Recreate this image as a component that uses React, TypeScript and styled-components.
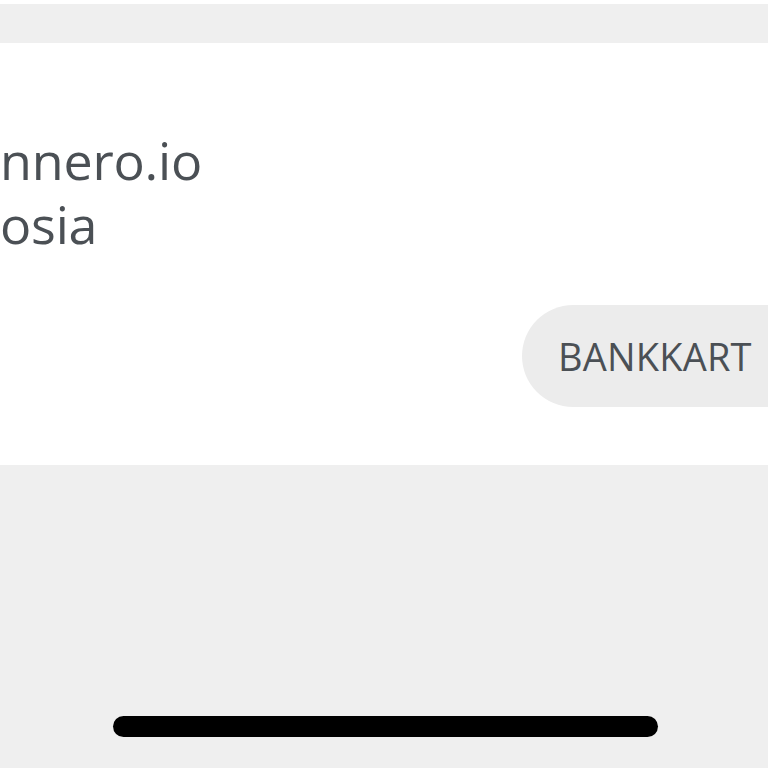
import React from "react";
import styled, { createGlobalStyle } from "styled-components";

const Global = createGlobalStyle`
  html, body {
    margin: 0;
    padding: 0;
    background: #efefef;
    overflow: hidden;
  }
  body {
    font-family: "Open Sans", "Noto Sans", sans-serif;
  }
`;

const Screen = styled.div`
  width: 768px;
  height: 768px;
  display: flex;
  flex-direction: column;
  background: #efefef;
  overflow: hidden;
`;

const TopGap = styled.div`
  height: 4px;
  background: #ffffff;
`;

const TopBand = styled.div`
  height: 39px;
  background: #efefef;
`;

const Card = styled.section`
  height: 422px;
  background: #ffffff;
  display: flex;
  flex-direction: column;
  padding-top: 85px;
  box-sizing: border-box;
`;

const Address = styled.div`
  font-size: 52px;
  line-height: 64px;
  color: #4b5055;
  letter-spacing: -0.2px;
  white-space: nowrap;
`;

const Line = styled.div``;

const ActionRow = styled.div`
  display: flex;
  justify-content: flex-end;
  margin-top: 49px;
`;

const Pill = styled.button`
  height: 102px;
  border: none;
  border-radius: 51px 0 0 51px;
  background: #ececec;
  padding: 0 0 0 36px;
  width: 246px;
  text-align: left;
  font-family: "Open Sans", "Noto Sans", sans-serif;
  font-size: 38px;
  color: #4b5055;
  letter-spacing: 0.2px;
  white-space: nowrap;
`;

const Bottom = styled.div`
  flex: 1;
  display: flex;
  justify-content: center;
  align-items: flex-end;
  padding-bottom: 31px;
`;

const HomeIndicator = styled.div`
  width: 545px;
  height: 21px;
  border-radius: 11px;
  background: #000000;
  margin-left: 3px;
`;

export default function App() {
  return (
    <Screen>
      <Global />
      <TopGap />
      <TopBand />
      <Card>
        <Address>
          <Line>nnero.io</Line>
          <Line>osia</Line>
        </Address>
        <ActionRow>
          <Pill>BANKKART</Pill>
        </ActionRow>
      </Card>
      <Bottom>
        <HomeIndicator />
      </Bottom>
    </Screen>
  );
}
